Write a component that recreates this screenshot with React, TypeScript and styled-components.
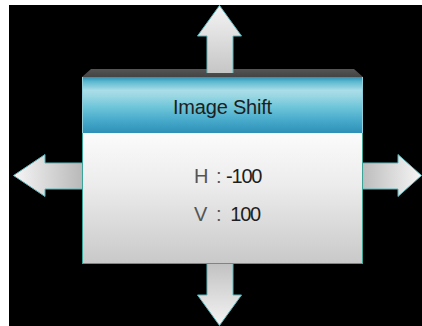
import React from "react";
import styled, { createGlobalStyle } from "styled-components";

const Global = createGlobalStyle`
  html, body { margin: 0; padding: 0; background: #ffffff; }
  body { font-family: "Liberation Sans", Arial, sans-serif; }
`;

const Stage = styled.div`
  margin: 5px 0 0 9px;
  width: 413px;
  height: 321px;
  background: #000000;
  display: grid;
  grid-template-columns: 73px 281px 59px;
  grid-template-rows: 64px 195px 62px;
  overflow: hidden;
`;

const Panel = styled.div`
  grid-column: 2;
  grid-row: 2;
  display: flex;
  flex-direction: column;
  z-index: 1;
`;

const TopBar = styled.div`
  height: 8px;
  background: linear-gradient(#555555, #444444);
  clip-path: polygon(9px 0, calc(100% - 9px) 0, 100% 100%, 0 100%);
`;

const Header = styled.div`
  height: 56px;
  box-sizing: border-box;
  padding-top: 5px;
  display: flex;
  align-items: center;
  justify-content: center;
  border-left: 1px solid #8fd0dc;
  border-right: 1px solid #8fd0dc;
  background: linear-gradient(
    #2f8fb3 0%,
    #5bb7cf 8%,
    #a9dde8 24%,
    #9ad7e3 34%,
    #72c7da 52%,
    #4fb0ce 72%,
    #3a9ec2 88%,
    #2f8fb5 100%
  );
  color: #1e1e1e;
  font-size: 20px;
  letter-spacing: -0.2px;
`;

const Body = styled.div`
  flex: 1;
  box-sizing: border-box;
  border: 1px solid #3aa596;
  border-top: none;
  background: linear-gradient(#fbfbfb 0%, #ececec 40%, #c9c9c9 100%);
  display: flex;
  flex-direction: column;
  align-items: center;
  padding-top: 31px;
  padding-left: 9px;
  gap: 14px;
`;

const Row = styled.div`
  display: grid;
  grid-template-columns: 22px 10px 34px;
  align-items: center;
  height: 24px;
  font-size: 20px;
  letter-spacing: -1.2px;
  color: #2a2a2a;
`;

const Label = styled.span`
  color: #555555;
`;

const Colon = styled.span`
  color: #555555;
`;

const Value = styled.span`
  text-align: right;
  white-space: nowrap;
  color: #1e1e1e;
`;

const ArrowSlot = styled.svg<{ $col: number; $row: number; $ml: number; $mt: number }>`
  grid-column: ${(p) => p.$col};
  grid-row: ${(p) => p.$row};
  margin-left: ${(p) => p.$ml}px;
  margin-top: ${(p) => p.$mt}px;
  align-self: start;
  justify-self: start;
  overflow: visible;
  z-index: 2;
`;

const STROKE = "#5db7bb";

function Arrow({
  dir,
}: {
  dir: "up" | "down" | "left" | "right";
}) {
  if (dir === "up") {
    return (
      <ArrowSlot $col={2} $row={1} $ml={115} $mt={0} width={45} height={68} viewBox="0 0 45 68">
        <defs>
          <linearGradient id="gu" x1="0" y1="0" x2="0" y2="1">
            <stop offset="0" stopColor="#f4f4f4" />
            <stop offset="1" stopColor="#c6c6c6" />
          </linearGradient>
        </defs>
        <polygon points="22.5,0.5 44.5,31 36,31 36,68 10,68 10,31 0.5,31" fill="url(#gu)" />
        <polyline points="10,68 10,31 0.5,31 22.5,0.5 44.5,31 36,31 36,68" fill="none" stroke={STROKE} strokeWidth={1} />
      </ArrowSlot>
    );
  }
  if (dir === "down") {
    return (
      <ArrowSlot $col={2} $row={3} $ml={115} $mt={0} width={45} height={62} viewBox="0 0 45 62">
        <defs>
          <linearGradient id="gd" x1="0" y1="0" x2="0" y2="1">
            <stop offset="0" stopColor="#c2c2c2" />
            <stop offset="1" stopColor="#f4f4f4" />
          </linearGradient>
        </defs>
        <polygon points="10,0 36,0 36,31 44.5,31 22.5,61.5 0.5,31 10,31" fill="url(#gd)" />
        <polyline points="10,0 10,31 0.5,31 22.5,61.5 44.5,31 36,31 36,0" fill="none" stroke={STROKE} strokeWidth={1} />
      </ArrowSlot>
    );
  }
  if (dir === "left") {
    return (
      <ArrowSlot $col={1} $row={2} $ml={4} $mt={85} width={69} height={43} viewBox="0 0 69 43">
        <defs>
          <linearGradient id="gl" x1="0" y1="0" x2="1" y2="0">
            <stop offset="0" stopColor="#f6f6f6" />
            <stop offset="1" stopColor="#b9b9b9" />
          </linearGradient>
        </defs>
        <polygon points="0.5,21.5 32,0.5 32,9 69,9 69,35 32,35 32,42.5" fill="url(#gl)" />
        <polyline points="69,9 32,9 32,0.5 0.5,21.5 32,42.5 32,35 69,35" fill="none" stroke={STROKE} strokeWidth={1} />
      </ArrowSlot>
    );
  }
  return (
    <ArrowSlot $col={3} $row={2} $ml={0} $mt={85} width={59} height={43} viewBox="0 0 59 43">
      <defs>
        <linearGradient id="gr" x1="0" y1="0" x2="1" y2="0">
          <stop offset="0" stopColor="#bdbdbd" />
          <stop offset="1" stopColor="#f6f6f6" />
        </linearGradient>
      </defs>
      <polygon points="0,9 35,9 35,0.5 58.5,21.5 35,42.5 35,35 0,35" fill="url(#gr)" />
      <polyline points="0,9 35,9 35,0.5 58.5,21.5 35,42.5 35,35 0,35" fill="none" stroke={STROKE} strokeWidth={1} />
    </ArrowSlot>
  );
}

export default function App() {
  return (
    <>
      <Global />
      <Stage>
        <Panel>
          <TopBar />
          <Header>Image Shift</Header>
          <Body>
            <Row>
              <Label>H</Label>
              <Colon>:</Colon>
              <Value>-100</Value>
            </Row>
            <Row>
              <Label>V</Label>
              <Colon>:</Colon>
              <Value>100</Value>
            </Row>
          </Body>
        </Panel>
        <Arrow dir="up" />
        <Arrow dir="left" />
        <Arrow dir="right" />
        <Arrow dir="down" />
      </Stage>
    </>
  );
}
